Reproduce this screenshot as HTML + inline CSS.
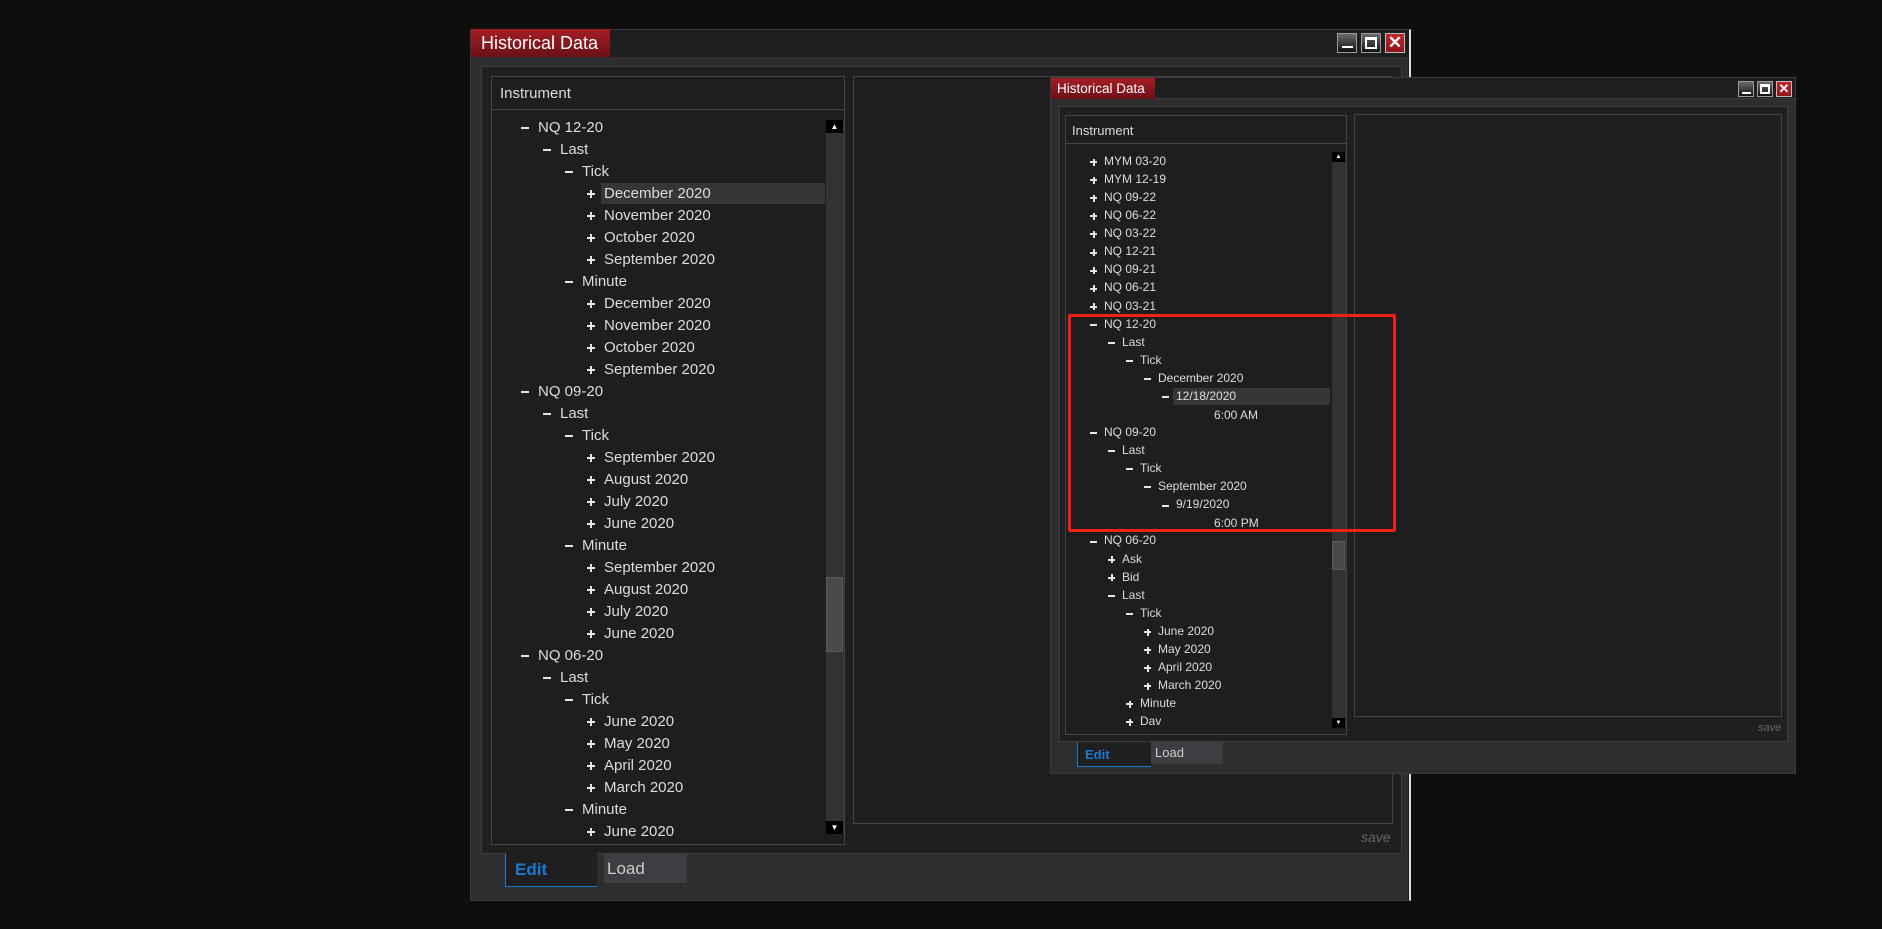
<!DOCTYPE html>
<html><head><meta charset="utf-8"><style>
*{margin:0;padding:0;box-sizing:border-box}
body{width:1882px;height:929px;background:#0e0e0e;position:relative;overflow:hidden;font-family:"Liberation Sans",sans-serif;color:#dcdcdc}
.abs{position:absolute}
.win{background:#1f1f1f;border:1px solid #3a3a3a}
.tab{background:linear-gradient(#a51d24,#6b1116);color:#fff}
.inner{background:#2b2b2d;border:1px solid #3d3d3f}
.panel{background:#1e1e1e;border:1px solid #444}
.btn{border:1px solid #9a9a9a;background:linear-gradient(#6a6a6a,#111)}
.btn.x{background:linear-gradient(#c6262c,#8e1519);border-color:#bbb}
.row{position:absolute;white-space:nowrap}
.ic{position:absolute;background:#e6e6e6}
.sb{background:#333}
.arr{background:#000}
</style></head><body>

<!-- Window 1 -->
<div class="abs win" style="left:470px;top:29px;width:941px;height:872px;border-color:#3a3a3a #e0e0e0 #3a3a3a #3a3a3a;border-right-width:2px"></div>
<div class="abs tab" style="left:471px;top:29px;width:139px;height:28px;font-size:18px;line-height:28px;padding-left:10px">Historical Data</div>
<div class="abs" style="left:471px;top:57px;width:937px;height:843px;background:#2e2e31"></div>
<div class="abs btn" style="left:1337px;top:33px;width:20px;height:20px"><div class="abs" style="left:4px;top:12px;width:11px;height:2px;background:#fff"></div></div>
<div class="abs btn" style="left:1361px;top:33px;width:20px;height:20px"><div class="abs" style="left:3px;top:3px;width:12px;height:12px;border:2px solid #fff;border-top-width:3px"></div></div>
<div class="abs btn x" style="left:1385px;top:33px;width:20px;height:20px;color:#fff;font:bold 17px/18px 'Liberation Sans',sans-serif;text-align:center">✕</div>
<div class="abs inner" style="left:481px;top:66px;width:921px;height:788px;background:#1f1f1f"></div>
<div class="abs panel" style="left:491px;top:76px;width:354px;height:769px"></div>
<div class="abs" style="left:491px;top:109px;width:354px;height:1px;background:#444"></div>
<div class="abs" style="left:500px;top:85px;font-size:15px">Instrument</div>
<div class="abs sb" style="left:826px;top:120px;width:18px;height:714px"></div>
<div class="abs arr" style="left:826px;top:120px;width:17px;height:13px;color:#fff;font-size:8px;text-align:center;line-height:13px">▲</div>
<div class="abs arr" style="left:826px;top:821px;width:17px;height:13px;color:#fff;font-size:8px;text-align:center;line-height:13px">▼</div>
<div class="abs" style="left:826px;top:577px;width:17px;height:75px;background:#4a4a4a;border:1px solid #5a5a5a"></div>
<div class="abs panel" style="left:853px;top:76px;width:540px;height:748px"></div>
<div class="abs" style="left:1361px;top:829px;font-size:14px;font-style:italic;color:#666">save</div>
<div class="abs" style="left:505px;top:853px;width:92px;height:34px;background:#1f1f1f;border-left:1px solid #1a7ad0;border-bottom:1px solid #1a7ad0;color:#1a7ad0;font-weight:bold;font-size:17px;line-height:34px;padding-left:9px">Edit</div>
<div class="abs" style="left:604px;top:854px;width:83px;height:29px;background:#3d3d42;color:#ccc;font-size:17px;line-height:29px;padding-left:3px">Load</div>
<div id="t1" class="abs" style="left:0;top:0"></div>

<!-- Window 2 -->
<div class="abs win" style="left:1050px;top:77px;width:746px;height:697px;background:#2e2e31"></div>
<div class="abs" style="left:1051px;top:78px;width:744px;height:21px;background:#1f1f1f;border-bottom:1px solid #3a3a3a"></div>
<div class="abs tab" style="left:1051px;top:78px;width:104px;height:21px;font-size:13.5px;line-height:21px;padding-left:6px">Historical Data</div>
<div class="abs btn" style="left:1738px;top:81px;width:16px;height:16px"><div class="abs" style="left:3px;top:10px;width:9px;height:2px;background:#fff"></div></div>
<div class="abs btn" style="left:1757px;top:81px;width:16px;height:16px"><div class="abs" style="left:2px;top:2px;width:10px;height:10px;border:2px solid #fff;border-top-width:3px"></div></div>
<div class="abs btn x" style="left:1776px;top:81px;width:16px;height:16px;color:#fff;font:bold 13px/14px 'Liberation Sans',sans-serif;text-align:center">✕</div>
<div class="abs inner" style="left:1059px;top:106px;width:729px;height:636px;background:#1f1f1f"></div>
<div class="abs panel" style="left:1065px;top:115px;width:282px;height:620px"></div>
<div class="abs" style="left:1065px;top:143px;width:282px;height:1px;background:#444"></div>
<div class="abs" style="left:1072px;top:123px;font-size:13px">Instrument</div>
<div class="abs sb" style="left:1332px;top:152px;width:14px;height:576px"></div>
<div class="abs arr" style="left:1332px;top:152px;width:13px;height:10px;color:#fff;font-size:6px;text-align:center;line-height:10px">▲</div>
<div class="abs arr" style="left:1332px;top:718px;width:13px;height:10px;color:#fff;font-size:6px;text-align:center;line-height:10px">▼</div>
<div class="abs" style="left:1332px;top:541px;width:13px;height:29px;background:#4a4a4a;border:1px solid #5a5a5a"></div>
<div class="abs panel" style="left:1354px;top:114px;width:428px;height:603px"></div>
<div class="abs" style="left:1758px;top:722px;font-size:11px;font-style:italic;color:#666">save</div>
<div class="abs" style="left:1077px;top:742px;width:74px;height:25px;background:#1f1f1f;border-left:1px solid #1a7ad0;border-bottom:1px solid #1a7ad0;color:#1a7ad0;font-weight:bold;font-size:13px;line-height:25px;padding-left:7px">Edit</div>
<div class="abs" style="left:1151px;top:742px;width:72px;height:22px;background:#3d3d42;color:#ccc;font-size:13px;line-height:22px;padding-left:4px">Load</div>
<div id="t2" class="abs" style="left:0;top:0"></div>
<div class="abs" style="left:1068px;top:314px;width:328px;height:218px;border:3px solid #f0201a;border-radius:2px"></div>

<script>
function build(id,rows,o){
 var h='';
 rows.forEach(function(r,i){
  var lv=r[0],s=r[1],t=r[2],sel=r[3];
  var cy=o.y0+i*o.step;
  if(s==='t'){h+='<div class="row" style="left:'+o.tx+'px;top:'+(cy-o.fs*0.6)+'px;font-size:'+o.fs+'px">'+t+'</div>';return;}
  var ix=o.x0+lv*o.ind, tx=ix+o.gap;
  if(sel)h+='<div class="abs" style="left:'+(tx-3)+'px;top:'+(cy-o.step/2)+'px;width:'+(o.sbx-tx+2)+'px;height:'+(o.step-1)+'px;background:#363636"></div>';
  h+='<div class="ic" style="left:'+ix+'px;top:'+(cy-1)+'px;width:'+o.iw+'px;height:2px"></div>';
  if(s==='+')h+='<div class="ic" style="left:'+(ix+o.iw/2-1)+'px;top:'+(cy-o.iw/2)+'px;width:2px;height:'+o.iw+'px"></div>';
  h+='<div class="row" style="left:'+tx+'px;top:'+(cy-o.fs*0.6)+'px;font-size:'+o.fs+'px;line-height:'+(o.fs*1.15)+'px">'+t+'</div>';
 });
 document.getElementById(id).innerHTML=h;
}
var r1=[[0,'-','NQ 12-20'],[1,'-','Last'],[2,'-','Tick'],[3,'+','December 2020',1],[3,'+','November 2020'],[3,'+','October 2020'],[3,'+','September 2020'],[2,'-','Minute'],[3,'+','December 2020'],[3,'+','November 2020'],[3,'+','October 2020'],[3,'+','September 2020'],
[0,'-','NQ 09-20'],[1,'-','Last'],[2,'-','Tick'],[3,'+','September 2020'],[3,'+','August 2020'],[3,'+','July 2020'],[3,'+','June 2020'],[2,'-','Minute'],[3,'+','September 2020'],[3,'+','August 2020'],[3,'+','July 2020'],[3,'+','June 2020'],
[0,'-','NQ 06-20'],[1,'-','Last'],[2,'-','Tick'],[3,'+','June 2020'],[3,'+','May 2020'],[3,'+','April 2020'],[3,'+','March 2020'],[2,'-','Minute'],[3,'+','June 2020']];
build('t1',r1,{y0:127.5,step:22,x0:521,ind:22,gap:17,iw:8,fs:15,sbx:826});
var r2=[[0,'+','MYM 03-20'],[0,'+','MYM 12-19'],[0,'+','NQ 09-22'],[0,'+','NQ 06-22'],[0,'+','NQ 03-22'],[0,'+','NQ 12-21'],[0,'+','NQ 09-21'],[0,'+','NQ 06-21'],[0,'+','NQ 03-21'],
[0,'-','NQ 12-20'],[1,'-','Last'],[2,'-','Tick'],[3,'-','December 2020'],[4,'-','12/18/2020',1],[0,'t','6:00 AM'],
[0,'-','NQ 09-20'],[1,'-','Last'],[2,'-','Tick'],[3,'-','September 2020'],[4,'-','9/19/2020'],[0,'t','6:00 PM'],
[0,'-','NQ 06-20'],[1,'+','Ask'],[1,'+','Bid'],[1,'-','Last'],[2,'-','Tick'],[3,'+','June 2020'],[3,'+','May 2020'],[3,'+','April 2020'],[3,'+','March 2020'],[2,'+','Minute'],[2,'+','Dav']];
build('t2',r2,{y0:162.2,step:18.07,x0:1090,ind:18,gap:14,iw:7,fs:12,sbx:1331,tx:1214});
</script>
</body></html>
